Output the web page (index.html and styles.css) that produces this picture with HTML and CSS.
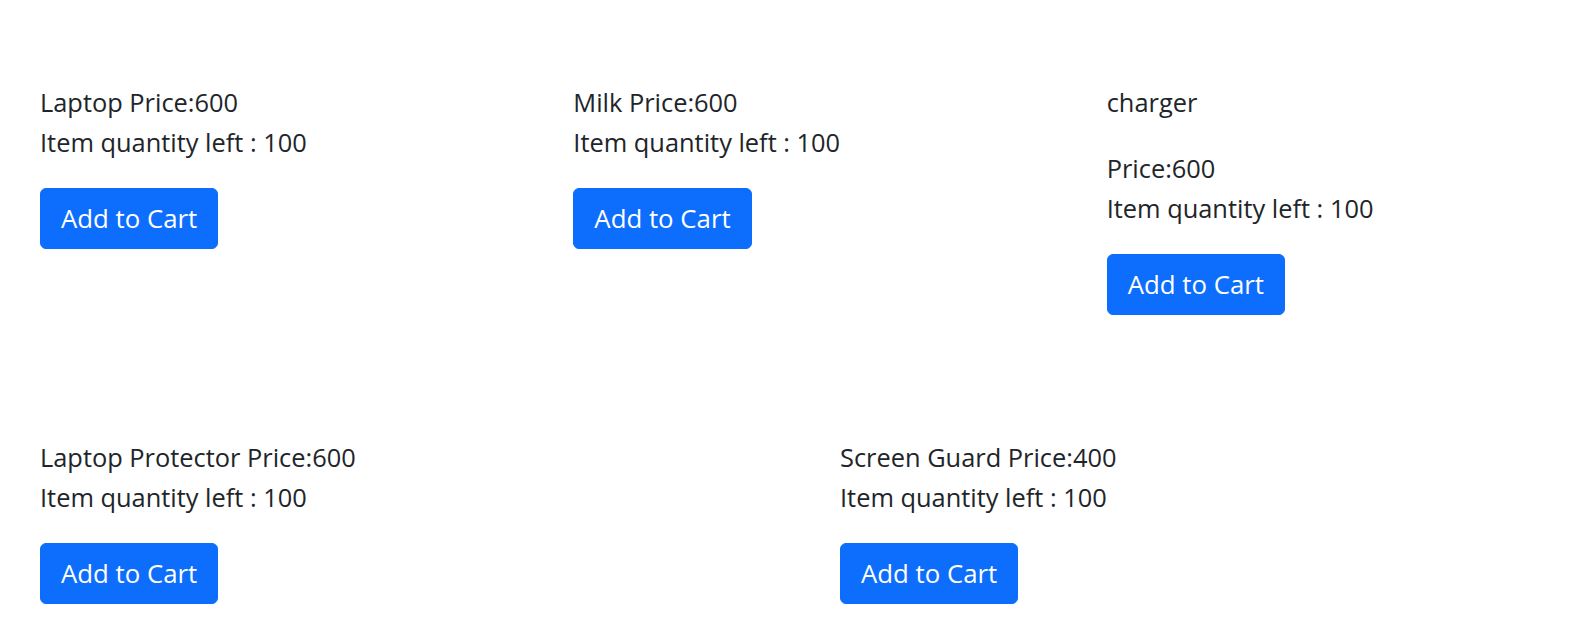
FILE: index.html
```html
<!DOCTYPE html>
<html lang="en">
<head>
<meta charset="utf-8">
<title>Products</title>
<link rel="stylesheet" href="styles.css">
</head>
<body>
<main class="shop">
  <section class="row row-three">
    <div class="product">
      <p class="info">Laptop Price:600<br>Item quantity left : 100</p>
      <button class="btn">Add to Cart</button>
    </div>
    <div class="product">
      <p class="info">Milk Price:600<br>Item quantity left : 100</p>
      <button class="btn">Add to Cart</button>
    </div>
    <div class="product">
      <p class="info">charger</p>
      <p class="info">Price:600<br>Item quantity left : 100</p>
      <button class="btn">Add to Cart</button>
    </div>
  </section>
  <section class="row row-two">
    <div class="product">
      <p class="info">Laptop Protector Price:600<br>Item quantity left : 100</p>
      <button class="btn">Add to Cart</button>
    </div>
    <div class="product">
      <p class="info">Screen Guard Price:400<br>Item quantity left : 100</p>
      <button class="btn">Add to Cart</button>
    </div>
  </section>
</main>
</body>
</html>
```
FILE: styles.css
```css
html, body {
  margin: 0;
  padding: 0;
  background: #ffffff;
}

body {
  font-family: "Open Sans", "Noto Sans", sans-serif;
  font-size: 25.4px;
  line-height: 40px;
  color: #212529;
}

.shop {
  padding-left: 40px;
}

.row {
  display: grid;
  align-items: start;
}

.row-three {
  grid-template-columns: 533.33px 533.33px 1fr;
  padding-top: 81.5px;
}

.row-two {
  grid-template-columns: 800px 1fr;
  padding-top: 122px;
}

.product {
  display: flex;
  flex-direction: column;
  align-items: flex-start;
}

.info {
  margin: 0 0 26px 0;
  white-space: nowrap;
}

.info + .info {
  margin-top: 0.67px;
}

.btn {
  font-family: inherit;
  font-size: 25.8px;
  line-height: 39px;
  padding: 10px 20px;
  color: #ffffff;
  background: #0d6efd;
  border: 1px solid #0d6efd;
  border-radius: 6px;
  cursor: pointer;
}
```
